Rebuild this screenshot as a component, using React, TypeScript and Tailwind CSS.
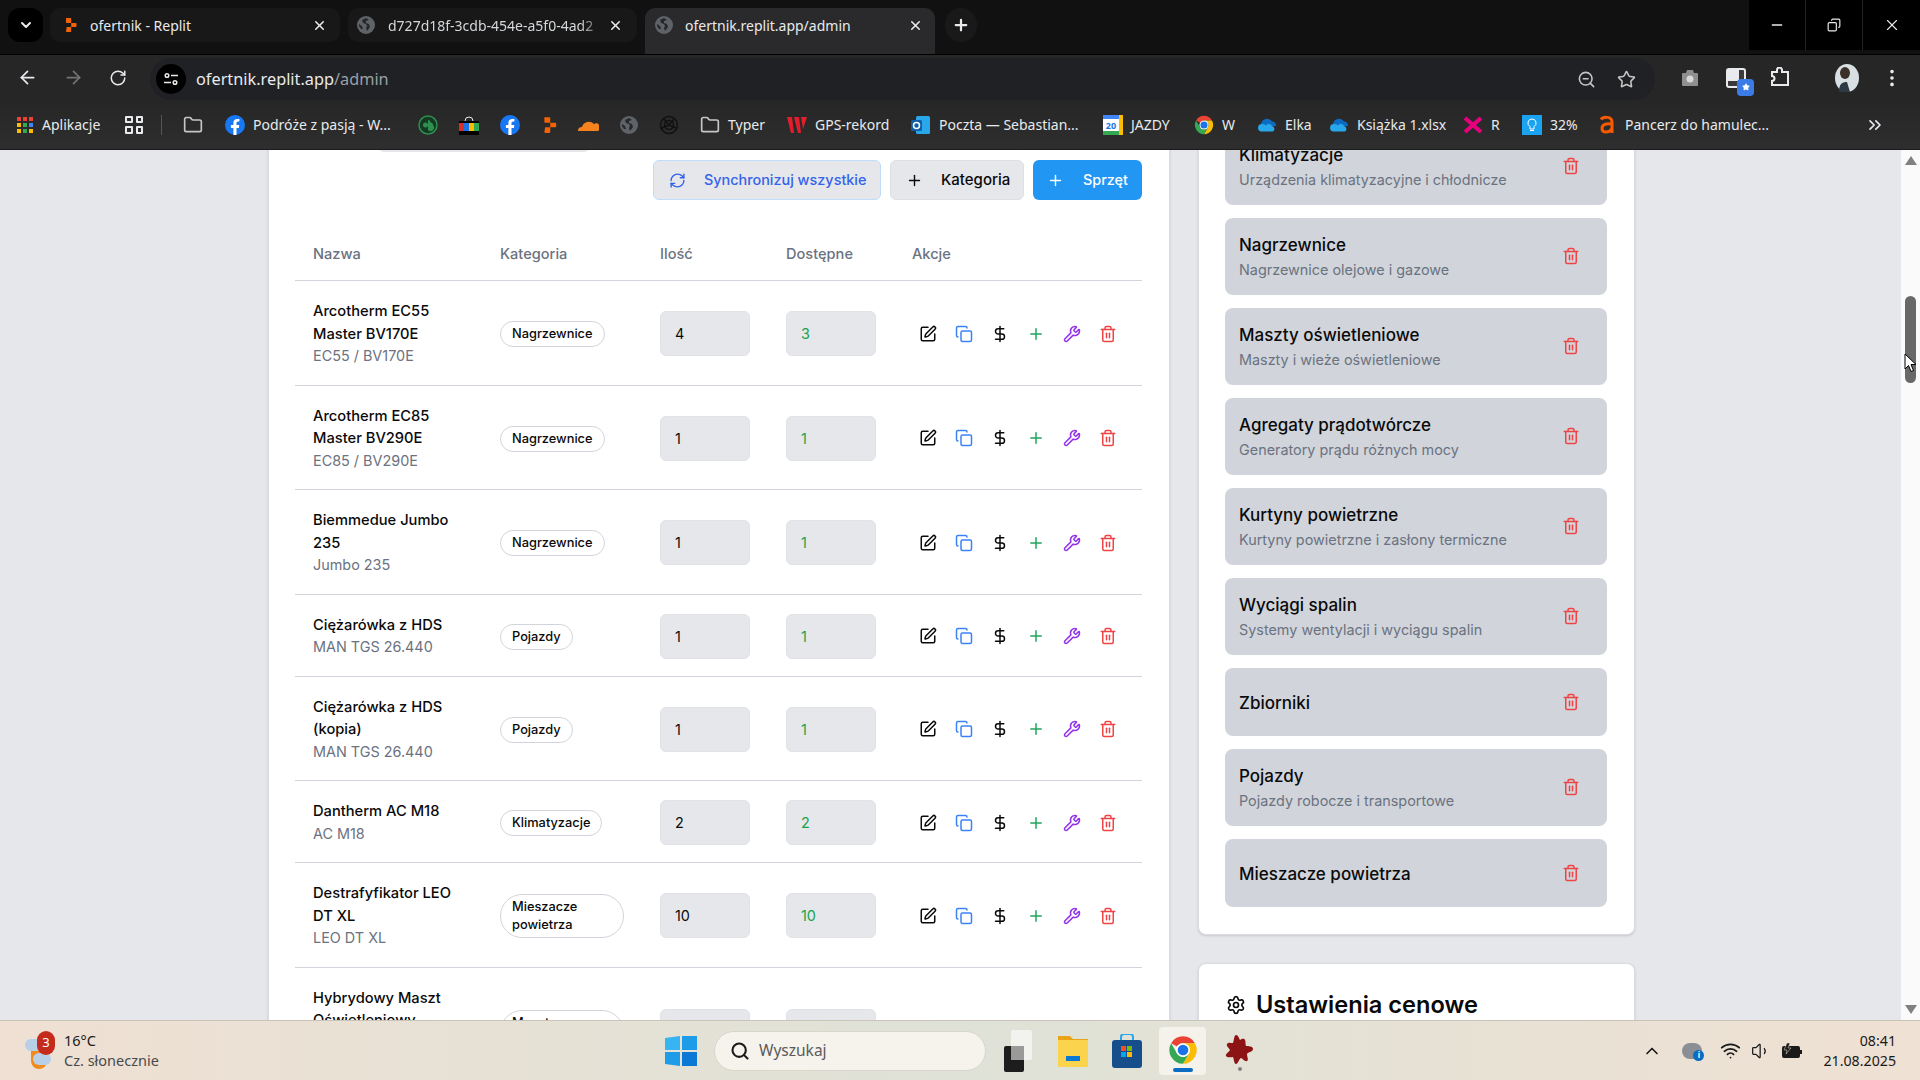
// App.tsx - ofertnik admin page inside a Chrome window on Windows 11

import {
  ChevronDown,
  ChevronUp,
  ChevronsRight,
  Copy,
  DollarSign,
  EllipsisVertical,
  Folder,
  Minus,
  Plus,
  RefreshCw,
  RotateCw,
  ArrowLeft,
  ArrowRight,
  Search,
  Settings,
  SquarePen,
  Star,
  Trash2,
  Wrench,
  X,
  ZoomOut,
  Wifi,
  Volume1,
} from "lucide-react";

const equipment = [
  { name: "Arcotherm EC55 Master BV170E", model: "EC55 / BV170E", category: "Nagrzewnice", qty: "4", free: "3" },
  { name: "Arcotherm EC85 Master BV290E", model: "EC85 / BV290E", category: "Nagrzewnice", qty: "1", free: "1" },
  { name: "Biemmedue Jumbo 235", model: "Jumbo 235", category: "Nagrzewnice", qty: "1", free: "1" },
  { name: "Ciężarówka z HDS", model: "MAN TGS 26.440", category: "Pojazdy", qty: "1", free: "1" },
  { name: "Ciężarówka z HDS (kopia)", model: "MAN TGS 26.440", category: "Pojazdy", qty: "1", free: "1" },
  { name: "Dantherm AC M18", model: "AC M18", category: "Klimatyzacje", qty: "2", free: "2" },
  { name: "Destrafyfikator LEO DT XL", model: "LEO DT XL", category: "Mieszacze powietrza", qty: "10", free: "10" },
  { name: "Hybrydowy Maszt Oświetleniowy", model: "", category: "Maszty oświetleniowe", qty: "1", free: "1" },
];

const categories = [
  { name: "Klimatyzacje", desc: "Urządzenia klimatyzacyjne i chłodnicze" },
  { name: "Nagrzewnice", desc: "Nagrzewnice olejowe i gazowe" },
  { name: "Maszty oświetleniowe", desc: "Maszty i wieże oświetleniowe" },
  { name: "Agregaty prądotwórcze", desc: "Generatory prądu różnych mocy" },
  { name: "Kurtyny powietrzne", desc: "Kurtyny powietrzne i zasłony termiczne" },
  { name: "Wyciągi spalin", desc: "Systemy wentylacji i wyciągu spalin" },
  { name: "Zbiorniki", desc: "" },
  { name: "Pojazdy", desc: "Pojazdy robocze i transportowe" },
  { name: "Mieszacze powietrza", desc: "" },
];

function ReplitIcon({ size = 16 }: { size?: number }) {
  return (
    <svg width={size} height={size} viewBox="0 0 16 16" fill="#f26207">
      <path d="M3 1h4.500a.7.7 0 0 1 .7.7V6H3.700a.7.7 0 0 1-.7-.7z" />
      <path d="M8.200 6h4.600a.7.7 0 0 1 .7.7v2.600a.7.7 0 0 1-.7.7H8.200z" />
      <path d="M3.700 10h4.500v4.300a.7.7 0 0 1-.7.7H3.700a.7.7 0 0 1-.7-.7z" />
    </svg>
  );
}

function GlobeIcon({ size = 18 }: { size?: number }) {
  return (
    <svg width={size} height={size} viewBox="0 0 18 18">
      <circle cx="9" cy="9" r="9" fill="#5f6368" />
      <path d="M9 2 5 4l1 3 3 1 1 2-1 2 1 3 3-4-1-3-3-1V5l3-1z" fill="#26282b" />
      <path d="M2 8l3 2 1 3-2 0-2-3z" fill="#26282b" />
    </svg>
  );
}

function FacebookIcon() {
  return (
    <svg width="20" height="20" viewBox="0 0 20 20">
      <circle cx="10" cy="10" r="10" fill="#1877f2" />
      <path d="M13.900 12.900l.4-2.900h-2.800V8.100c0-.8.4-1.600 1.600-1.600h1.300V4.100s-1.100-.2-2.200-.2c-2.300 0-3.800 1.400-3.800 3.900V10H5.900v2.900h2.500V20h3.100v-7.100z" fill="#fff" />
    </svg>
  );
}

function ChromeIcon({ size = 20 }: { size?: number }) {
  return (
    <svg width={size} height={size} viewBox="0 0 48 48">
      <path d="M24 2a22 22 0 0 1 19.050 11H24a11 11 0 0 0-9.530 5.500L5 13.050A22 22 0 0 1 24 2z" fill="#ea4335" />
      <path d="M43.050 13A22 22 0 0 1 24 46l9.530-16.500A11 11 0 0 0 33.500 18.500L24 13z" fill="#fbbc04" />
      <path d="M5 13.050 14.470 29.500A11 11 0 0 0 33.530 29.500L24 46A22 22 0 0 1 5 13.050z" fill="#34a853" />
      <circle cx="24" cy="24" r="11" fill="#fff" />
      <circle cx="24" cy="24" r="8.500" fill="#1a73e8" />
    </svg>
  );
}

function CloudIcon({ size = 20 }: { size?: number }) {
  return (
    <svg width={size} height={size} viewBox="0 0 20 20">
      <path d="M4 9a6 6 0 0 1 11-2.500A4 4 0 0 1 19 11H4z" fill="#0a6cc2" />
      <path d="M5 9a4 4 0 0 1 4 1.500 3.500 3.500 0 0 1 6 .5 3 3 0 0 1 1 5.500H4a3.800 3.800 0 0 1 1-7.500z" fill="#28a8ea" />
    </svg>
  );
}

function AppsGrid() {
  const colors = ["#ea4335", "#ea4335", "#ea4335", "#fbbc04", "#34a853", "#4285f4", "#fbbc04", "#34a853", "#fbbc04"];
  return (
    <div className="grid h-4 w-4 grid-cols-3 gap-[2px]">
      {colors.map((color, i) => (
        <span key={i} style={{ backgroundColor: color }} />
      ))}
    </div>
  );
}

function Bookmark({ icon, label, width }: { icon: React.ReactNode; label: string; width: number }) {
  return (
    <div className="flex shrink-0 items-center gap-2">
      <span className="flex h-5 w-5 items-center justify-center">{icon}</span>
      <span className="whitespace-nowrap" style={{ width }}>
        {label}
      </span>
    </div>
  );
}

function ChromeTop() {
  return (
    <div className="shrink-0 font-['Noto_Sans',sans-serif] text-[#e8eaed]">
      {/* tab strip */}
      <div className="flex h-[55px] border-b border-[#000] bg-[#111111]">
        <div className="flex flex-1 items-start pl-2 pt-2">
          <div className="flex h-[34px] w-[35px] items-center justify-center rounded-[12px] bg-[#000]">
            <ChevronDown size={16} strokeWidth={3} />
          </div>
          <div className="ml-[7px] flex h-[34px] w-[290px] items-center rounded-[10px] bg-[#181818] pl-[13px] pr-[13px] text-[14px]">
            <ReplitIcon size={16} />
            <span className="ml-[11px] flex-1">ofertnik - Replit</span>
            <X size={15} strokeWidth={2.5} />
          </div>
          <div className="ml-2 flex h-[34px] w-[289px] items-center rounded-[10px] bg-[#181818] pl-[9px] pr-[14px] text-[14px]">
            <GlobeIcon />
            <span className="ml-[13px] w-[218px] overflow-hidden whitespace-nowrap text-[#d5d7da] [mask-image:linear-gradient(to_right,#000_88%,transparent)]">
              d727d18f-3cdb-454e-a5f0-4ad2
            </span>
            <X size={15} strokeWidth={2.5} className="ml-auto" />
          </div>
          <div className="ml-2 flex h-[46px] w-[290px] items-start rounded-t-[10px] bg-[#2a2a2c] pl-[10px] pr-[12px] pt-[8px] text-[14px]">
            <GlobeIcon />
            <span className="ml-[12px] flex-1 leading-[19px]">ofertnik.replit.app/admin</span>
            <X size={15} strokeWidth={2.5} className="mt-[2px]" />
          </div>
          <div className="ml-[10px] flex h-[34px] w-[32px] items-center justify-center rounded-full bg-[#191919]">
            <Plus size={18} strokeWidth={3} />
          </div>
        </div>
        <div className="flex h-[50px] w-[171px] bg-[#000]">
          <div className="flex w-[57px] items-center justify-center border-r border-[#222]">
            <Minus size={16} />
          </div>
          <div className="flex w-[57px] items-center justify-center border-r border-[#222]">
            <Copy size={14} className="-scale-x-100" />
          </div>
          <div className="flex w-[57px] items-center justify-center">
            <X size={18} strokeWidth={1.5} />
          </div>
        </div>
      </div>

      {/* address bar */}
      <div className="flex h-[45px] items-end bg-[#262627] pl-[17px]">
        <div className="flex h-[45px] w-[133px] items-center gap-[25px] text-[#e8eaed]">
          <ArrowLeft size={21} />
          <ArrowRight size={21} className="text-[#737373]" />
          <RotateCw size={18} />
        </div>
        <div className="flex h-[42px] w-[1505px] items-center rounded-[21px] bg-[#202124] pl-[6px] pr-[19px]">
          <div className="flex h-[30px] w-[30px] items-center justify-center rounded-full bg-[#000]">
            <svg width="16" height="16" viewBox="0 0 16 16" fill="none" stroke="#e8eaed" strokeWidth="1.500">
              <circle cx="4" cy="4.500" r="1.800" />
              <path d="M8 4.500h7M1 11.500h7" />
              <circle cx="12" cy="11.500" r="1.800" />
            </svg>
          </div>
          <span className="ml-[10px] pt-[1px] text-[16.300px]">
            ofertnik.replit.app<span className="text-[#9aa0a6]">/admin</span>
          </span>
          <ZoomOut size={19} className="ml-auto text-[#c4c7c5]" />
          <Star size={19} className="ml-[21px] text-[#c4c7c5]" />
        </div>
        <div className="flex h-[45px] flex-1 items-center pl-[25px]">
          <svg width="20" height="20" viewBox="0 0 20 20" fill="#8f8f8f">
            <path d="M7 2h6l1 3h3a1 1 0 0 1 1 1v11a1 1 0 0 1-1 1H3a1 1 0 0 1-1-1V6a1 1 0 0 1 1-1h3z" />
            <circle cx="10" cy="11" r="3.500" fill="#d8d8d8" />
          </svg>
          <div className="relative ml-[26px] h-[20px] w-[20px] rounded-[3px] border-2 border-[#e8eaed] bg-[#3a3a3a]">
            <span className="absolute left-0 top-0 h-[11px] w-[11px] bg-[#e8eaed]" />
            <span className="absolute -bottom-[10px] -right-[10px] flex h-[17px] w-[17px] items-center justify-center rounded-[4px] bg-[#3b7be8]">
              <Star size={8} fill="#fff" stroke="#fff" />
            </span>
          </div>
          <svg width="22" height="22" viewBox="0 0 22 22" fill="none" stroke="#e8eaed" strokeWidth="2" className="ml-[23px]">
            <path d="M3 5h5V3a2 2 0 0 1 5 0v2h6v13H3v-4a2.500 2.500 0 0 0 0-5z" />
          </svg>
          <svg width="24" height="28" viewBox="0 0 24 28" className="ml-[44px]">
            <ellipse cx="12" cy="14" rx="12" ry="14" fill="#d8dfe2" />
            <path d="M4 28c0-8 3-10 8-10l3 10z" fill="#2d3a45" />
            <ellipse cx="10" cy="9" rx="5" ry="6" fill="#3a3029" />
          </svg>
          <EllipsisVertical size={22} className="ml-[22px]" />
        </div>
      </div>

      {/* bookmarks */}
      <div className="flex h-[50px] items-center gap-[21px] border-b border-[#1c1c1c] bg-linear-to-b from-[#262627] to-[#2e2e2e] pl-[17px] text-[14px]">
        <div className="flex items-center gap-[9px]">
          <AppsGrid />
          <span className="w-[62px]">Aplikacje</span>
        </div>
        <div className="grid h-[18px] w-[18px] grid-cols-2 gap-[3px]">
          <span className="rounded-[1px] border-2 border-[#e8eaed]" />
          <span className="rounded-[1px] border-2 border-[#e8eaed]" />
          <span className="rounded-[1px] border-2 border-[#e8eaed]" />
          <span className="rounded-[1px] border-2 border-[#e8eaed]" />
        </div>
        <div className="-ml-[3px] h-[20px] w-px bg-[#555]" />
        <Folder size={20} className="text-[#c4c7c5]" />
        <div className="ml-[1px]">
          <Bookmark icon={<FacebookIcon />} label="Podróże z pasją - W..." width={144} />
        </div>
        <svg width="20" height="20" viewBox="0 0 20 20">
          <circle cx="10" cy="10" r="9" fill="#143a22" stroke="#2f8f4f" strokeWidth="1.500" />
          <path d="M10 5a2.500 2.500 0 0 1 0 5 2.500 2.500 0 0 1-5 0 2.500 2.500 0 0 1 5 0zm0 5a2.500 2.500 0 0 1 5 0 2.500 2.500 0 0 1-5 5z" fill="#2f8f4f" />
        </svg>
        <svg width="20" height="20" viewBox="0 0 20 20">
          <path d="M6 6a4 4 0 0 1 8 0" fill="none" stroke="#e8eaed" />
          <rect y="6" width="20" height="14" fill="#000" />
          <rect y="8" width="5" height="8" fill="#d93025" />
          <rect x="5" y="8" width="5" height="8" fill="#1a73e8" />
          <rect x="10" y="8" width="5" height="8" fill="#fbbc04" />
          <rect x="15" y="8" width="5" height="8" fill="#34a853" />
        </svg>
        <FacebookIcon />
        <ReplitIcon size={18} />
        <svg width="22" height="14" viewBox="0 0 22 14" fill="#f6821f" className="-ml-[3px]">
          <path d="M1 13a4 4 0 0 1 4-4 7 7 0 0 1 12-3 4 4 0 0 1 4 7z" />
        </svg>
        <GlobeIcon />
        <svg width="20" height="20" viewBox="0 0 20 20" fill="none" stroke="#111" strokeWidth="1.500">
          <circle cx="10" cy="10" r="8.500" />
          <circle cx="10" cy="10" r="4.500" />
          <path d="M5 4l5 6 5-6M3 13l7-3 7 3" />
        </svg>
        <Bookmark icon={<Folder size={20} className="text-[#c4c7c5]" />} label="Typer" width={38} />
        <Bookmark
          icon={
            <svg width="20" height="20" viewBox="0 0 20 20" fill="#e21d2c">
              <path d="M0 2h5l2 16H4zM7 2h5l2 16h-3zM14 2h6l-4 12z" />
            </svg>
          }
          label="GPS-rekord"
          width={75}
        />
        <Bookmark
          icon={
            <svg width="20" height="20" viewBox="0 0 20 20">
              <rect x="5" y="1" width="14" height="18" rx="1.500" fill="#28a8ea" />
              <rect y="5" width="11" height="11" rx="1.500" fill="#0f5fa8" />
              <circle cx="5.500" cy="10.500" r="3" fill="none" stroke="#fff" strokeWidth="1.500" />
            </svg>
          }
          label="Poczta — Sebastian..."
          width={143}
        />
        <Bookmark
          icon={
            <svg width="20" height="20" viewBox="0 0 20 20">
              <rect width="20" height="20" rx="1.500" fill="#fff" />
              <path d="M0 0h20v4H0z" fill="#4285f4" />
              <path d="M0 16h20v4H0z" fill="#34a853" />
              <path d="M16 0h4v20h-4z" fill="#fbbc04" />
              <text x="8" y="14" fontSize="9" fontWeight="700" textAnchor="middle" fill="#1a73e8">20</text>
            </svg>
          }
          label="JAZDY"
          width={42}
        />
        <Bookmark icon={<ChromeIcon />} label="W" width={14} />
        <Bookmark icon={<CloudIcon />} label="Elka" width={23} />
        <Bookmark icon={<CloudIcon />} label="Książka 1.xlsx" width={85} />
        <Bookmark
          icon={
            <svg width="20" height="20" viewBox="0 0 20 20" fill="none" stroke="#e6007e" strokeWidth="4">
              <path d="M2 3l16 14M18 3 2 17" />
            </svg>
          }
          label="R"
          width={10}
        />
        <Bookmark
          icon={
            <svg width="20" height="20" viewBox="0 0 20 20">
              <rect width="20" height="20" fill="#1aa3f0" />
              <path d="M10 4a4 4 0 0 0-2 7.500V14h4v-2.500A4 4 0 0 0 10 4zM8 15.500h4" fill="none" stroke="#fff" />
            </svg>
          }
          label="32%"
          width={26}
        />
        <Bookmark
          icon={
            <svg width="20" height="22" viewBox="0 0 20 22" fill="none" stroke="#f55a00" strokeWidth="3">
              <path d="M4 5.500C6 2.500 15 2 15 8v11M15 10c-7-1-10 1-10 4.500 0 4.500 7 5 10 0" />
            </svg>
          }
          label="Pancerz do hamulec..."
          width={143}
        />
        <ChevronsRight size={20} className="ml-auto mr-[35px]" />
      </div>
    </div>
  );
}

function EquipmentRow({ item }: { item: (typeof equipment)[number] }) {
  return (
    <div className="grid grid-cols-[187px_160px_126px_126px_1fr] items-center border-b border-[#d1d5db] pb-[17px] pt-[19px]">
      <div className={`pl-[18px] pr-[18px] ${item.model ? "" : "min-h-[90px]"}`}>
        <p className="text-[14.700px] font-medium leading-[22.500px] text-[#0a0a0a]">{item.name}</p>
        <p className="text-[14.400px] leading-[22.500px] text-[#6b7280]">{item.model}</p>
      </div>
      <div className="pl-[18px] pr-[18px]">
        <span className="inline-flex rounded-full border border-[#d1d5db] bg-white px-[11px] py-[3px] text-[12.800px] font-medium leading-[18px] text-[#0a0a0a]">
          {item.category}
        </span>
      </div>
      <div className="pl-[18px]">
        <input
          readOnly
          value={item.qty}
          className="h-[45px] w-[90px] rounded-[6px] border border-[#e0e2e6] bg-[#e5e7eb] pl-[14px] text-[14.400px] text-[#0a0a0a]"
        />
      </div>
      <div className="pl-[18px]">
        <input
          readOnly
          value={item.free}
          className="h-[45px] w-[90px] rounded-[6px] border border-[#e0e2e6] bg-[#e5e7eb] pl-[14px] text-[14.400px] text-[#16a34a]"
        />
      </div>
      <div className="flex pl-[16px]">
        <span className="flex w-9 justify-center text-[#0a0a0a]">
          <SquarePen size={18} />
        </span>
        <span className="flex w-9 justify-center text-[#3b82f6]">
          <Copy size={18} />
        </span>
        <span className="flex w-9 justify-center text-[#0a0a0a]">
          <DollarSign size={18} />
        </span>
        <span className="flex w-9 justify-center text-[#22a55b]">
          <Plus size={18} />
        </span>
        <span className="flex w-9 justify-center text-[#9333ea]">
          <Wrench size={18} />
        </span>
        <span className="flex w-9 justify-center text-[#ef4444]">
          <Trash2 size={18} />
        </span>
      </div>
    </div>
  );
}

function EquipmentCard() {
  return (
    <section className="w-[902px] shrink-0 rounded-[8px] border border-[#d9dce1] bg-white pl-[26px] pr-[27px] shadow-sm">
      {/* bottom of the tab list scrolled out of view */}
      <div className="ml-[83px] h-[41px] w-[212px] rounded-b-[6px] bg-[#e5e7eb]" />
      <div className="mt-[8px] flex justify-end gap-[9px]">
        <button className="flex h-10 w-[228px] items-center rounded-[6px] border border-[#bfdbfe] bg-[#e5e7eb] pl-[15px] text-[14.400px] font-medium text-[#3563e9]">
          <RefreshCw size={17} />
          <span className="ml-[18px]">Synchronizuj wszystkie</span>
        </button>
        <button className="flex h-10 w-[134px] items-center rounded-[6px] border border-[#dcdfe4] bg-[#e5e7eb] pl-[15px] text-[15px] font-medium text-[#0a0a0a]">
          <Plus size={17} />
          <span className="ml-[18px]">Kategoria</span>
        </button>
        <button className="flex h-10 w-[109px] items-center rounded-[6px] bg-[#2196f3] pl-[14px] text-[14.400px] font-medium text-white">
          <Plus size={17} />
          <span className="ml-[19px]">Sprzęt</span>
        </button>
      </div>
      <div className="mt-[36px] grid h-[45px] grid-cols-[187px_160px_126px_126px_1fr] items-center border-b border-[#d1d5db] pb-[7px] text-[14.600px] font-medium text-[#6b7280]">
        <span className="pl-[18px]">Nazwa</span>
        <span className="pl-[18px]">Kategoria</span>
        <span className="pl-[18px]">Ilość</span>
        <span className="pl-[18px]">Dostępne</span>
        <span className="pl-[18px]">Akcje</span>
      </div>
      {equipment.map((item) => (
        <EquipmentRow key={item.name} item={item} />
      ))}
    </section>
  );
}

function CategoriesColumn() {
  return (
    <div className="flex w-[437px] shrink-0 flex-col gap-[28px]">
      <section className="flex flex-col gap-[13px] rounded-[8px] border border-[#d9dce1] bg-white pb-[27px] pl-[26px] pr-[27px] pt-[17px] shadow-sm">
        {categories.map((cat) => (
          <div
            key={cat.name}
            className={`flex items-center justify-between rounded-[8px] bg-[#d1d5db] pl-[14px] pr-[27px] ${cat.desc ? "h-[77px]" : "h-[68px]"}`}
          >
            <div className="pt-[2px]">
              <p className="text-[17px] font-medium leading-[24px] text-[#0a0a0a]">{cat.name}</p>
              {cat.desc && <p className="text-[14.400px] leading-[26px] text-[#6b7280]">{cat.desc}</p>}
            </div>
            <Trash2 size={18} className="-mt-[1px] text-[#ef4444]" />
          </div>
        ))}
      </section>
      <section className="rounded-[8px] border border-[#d9dce1] bg-white px-[27px] pb-[27px] pt-[27px] shadow-sm">
        <div className="flex items-center gap-[10px]">
          <Settings size={20} className="text-[#0a0a0a]" />
          <h2 className="text-[23.600px] font-semibold leading-[28px] text-[#0a0a0a]">Ustawienia cenowe</h2>
        </div>
      </section>
    </div>
  );
}

function PageScrollbar() {
  return (
    <div className="relative flex w-[19px] shrink-0 flex-col items-center bg-[#fafafa]">
      <div className="mt-[6px] h-0 w-0 border-x-[6px] border-b-[9px] border-x-transparent border-b-[#808080]" />
      <div className="mt-[131px] h-[87px] w-[11px] rounded-full bg-[#686868]" />
      <div className="mb-[6px] mt-auto h-0 w-0 border-x-[6px] border-t-[9px] border-x-transparent border-t-[#808080]" />
      {/* mouse pointer over the thumb */}
      <svg width="13" height="21" viewBox="0 0 13 21" className="absolute left-[3px] top-[203px]">
        <path d="M1 1v15l3.500-3.500L7 18.500l2.500-1-2.500-6h5z" fill="#fff" stroke="#000" strokeWidth="1" />
      </svg>
    </div>
  );
}

function Taskbar() {
  return (
    <div className="flex h-[60px] shrink-0 items-center border-t border-[#c9c3ba] bg-linear-to-r from-[#efe0d3] via-[#dfe2d7] to-[#efe1d3] font-['Noto_Sans',sans-serif] text-[#1a1a1a]">
      <div className="relative ml-[25px] h-[40px] w-[32px]">
        <span className="absolute left-[6px] top-[18px] h-[20px] w-[16px] rounded-b-full bg-[#f28b1e]" />
        <span className="absolute left-0 top-[8px] h-[12px] w-[18px] rounded-full bg-[#b8cfe8]" />
        <span className="absolute left-[8px] top-[22px] h-[12px] w-[18px] rounded-full bg-[#b8cfe8]" />
        <span className="absolute left-[12px] top-0 flex h-[24px] w-[18px] items-center justify-center rounded-full bg-[#c42b1c] text-[13px] text-white">3</span>
      </div>
      <div className="ml-[7px] w-[601px] text-[14.500px] leading-[20px]">
        <p className="-mt-[2px]">16°C</p>
        <p className="text-[#4a4a4a]">Cz. słonecznie</p>
      </div>
      <svg width="32" height="30" viewBox="0 0 32 30" className="shrink-0">
        <path d="M0 2 15 0v14H0z" fill="#36b5f2" />
        <path d="M17 0l15-1v15H17z" fill="#1f9ce8" />
        <path d="M0 16h15v14L0 28z" fill="#1f9ce8" />
        <path d="M17 16h15v15l-15-1z" fill="#0a78d4" />
      </svg>
      <div className="ml-[17px] flex h-[40px] w-[272px] items-center rounded-full border border-[#d9d5cc] bg-[#f6f3ec] pl-[15px] text-[15.500px] text-[#5a5a5a]">
        <Search size={20} strokeWidth={2.5} className="text-[#1a1a1a]" />
        <span className="ml-[9px]">Wyszukaj</span>
      </div>
      <svg width="28" height="42" viewBox="0 0 28 42" className="ml-[18px] shrink-0">
        <rect x="0" y="16" width="20" height="26" rx="2" fill="#1d1d1d" />
        <rect x="7" y="0" width="21" height="30" rx="2" fill="#f4f4f2" fillOpacity="0.85" />
        <rect x="7" y="16" width="13" height="14" fill="#9a9a98" />
      </svg>
      <svg width="30" height="34" viewBox="0 0 30 34" className="ml-[26px] shrink-0">
        <path d="M0 2h12l3 3h15v5H0z" fill="#e8a317" />
        <rect y="6" width="30" height="27" rx="1" fill="#fcd34d" />
        <rect x="8" y="22" width="14" height="5" fill="#0a78d4" />
      </svg>
      <svg width="30" height="34" viewBox="0 0 30 34" className="ml-[24px] shrink-0">
        <path d="M9 8V3a3 3 0 0 1 3-3h6a3 3 0 0 1 3 3v5" fill="none" stroke="#28a8ea" strokeWidth="2" />
        <rect y="6" width="30" height="28" rx="3" fill="#164d8b" />
        <rect x="9" y="12" width="5" height="5" fill="#f25022" />
        <rect x="15" y="12" width="5" height="5" fill="#7fba00" />
        <rect x="9" y="18" width="5" height="5" fill="#00a4ef" />
        <rect x="15" y="18" width="5" height="5" fill="#ffb900" />
      </svg>
      <div className="ml-[17px] flex h-[48px] w-[47px] shrink-0 flex-col items-center rounded-[4px] bg-[#f5f2ec] pt-[8px]">
        <ChromeIcon size={30} />
        <span className="mt-[3px] h-[4px] w-[20px] rounded-full bg-[#0a6cc2]" />
      </div>
      <div className="ml-[19px] flex w-[30px] shrink-0 flex-col items-center pt-[4px]">
        <svg width="30" height="32" viewBox="0 0 30 32" fill="#8c1414">
          <path d="M11 1c2 0 3 3 4 5 2-1 4-2 5 0 1 2 0 4 1 6 2 0 7 0 7 3s-5 3-6 5c0 3 2 6 0 7s-4-2-6-3c-2 1-3 6-5 6s-2-5-3-7c-2 0-6 1-7-1s3-4 4-6c-1-2-4-4-3-6s4-1 6-1c1-2 1-8 3-8z" />
        </svg>
        <span className="mt-[1px] h-[4px] w-[4px] rounded-full bg-[#808080]" />
      </div>
      <div className="ml-auto flex items-center pr-[24px]">
        <ChevronUp size={20} strokeWidth={2} />
        <div className="relative ml-[20px] h-[16px] w-[20px] rounded-full bg-[#8b8f94]">
          <span className="absolute -bottom-[2px] -right-[2px] flex h-[11px] w-[11px] items-center justify-center rounded-full bg-[#0a6cc2] text-[8px] font-bold text-white">i</span>
        </div>
        <Wifi size={21} className="ml-[18px]" />
        <Volume1 size={20} strokeWidth={1.5} className="ml-[10px]" />
        <svg width="22" height="16" viewBox="0 0 22 16" className="ml-[10px]">
          <rect x="1" y="3" width="18" height="12" rx="2" fill="#1a1a1a" />
          <rect x="19" y="7" width="2" height="4" fill="#1a1a1a" />
          <path d="M6 0 3 7h3l-1 4 5-6H7l2-5z" fill="#1a1a1a" stroke="#efe0d3" strokeWidth=".5" />
        </svg>
        <div className="ml-[20px] text-right text-[14.200px] leading-[20px]">
          <p>08:41</p>
          <p>21.08.2025</p>
        </div>
      </div>
    </div>
  );
}

export default function App() {
  return (
    <div className="flex h-[1080px] w-[1920px] flex-col overflow-hidden font-['Inter',sans-serif]">
      <ChromeTop />
      <div className="flex min-h-0 flex-1">
        <main className="min-w-0 flex-1 overflow-hidden bg-[#e5e7eb]">
          {/* page is scrolled, so its top sits above the viewport */}
          <div className="-mt-[40px] flex gap-[28px] pl-[268px]">
            <EquipmentCard />
            <CategoriesColumn />
          </div>
        </main>
        <PageScrollbar />
      </div>
      <Taskbar />
    </div>
  );
}
